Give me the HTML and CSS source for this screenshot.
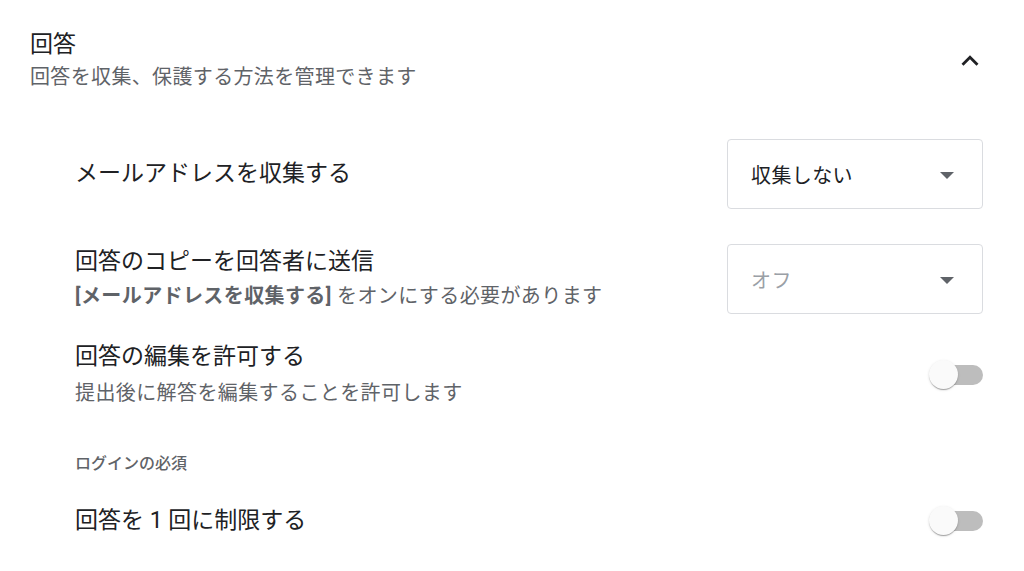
FILE: index.html
```html
<!DOCTYPE html>
<html lang="ja">
<head>
<meta charset="utf-8">
<link rel="stylesheet" href="styles.css">
</head>
<body>
<div class="page">
  <div class="header">
    <div class="head-text">
      <div class="title">回答</div>
      <div class="subtitle">回答を収集、保護する方法を管理できます</div>
    </div>
    <div class="chevron">
      <svg viewBox="0 0 24 24" width="34" height="34"><path d="M12 8l-6 6 1.41 1.41L12 10.83l4.59 4.58L18 14z" fill="#202124"/></svg>
    </div>
  </div>
  <div class="rows">
    <div class="row row-1">
      <div class="label">メールアドレスを収集する</div>
      <div class="select">
        <span class="select-text">収集しない</span>
        <span class="arrow"></span>
      </div>
    </div>
    <div class="row row-2">
      <div class="text-block">
        <div class="label">回答のコピーを回答者に送信</div>
        <div class="sublabel"><b>[メールアドレスを収集する]</b> をオンにする必要があります</div>
      </div>
      <div class="select">
        <span class="select-text disabled">オフ</span>
        <span class="arrow"></span>
      </div>
    </div>
    <div class="row row-3">
      <div class="text-block tall">
        <div class="label">回答の編集を許可する</div>
        <div class="sublabel">提出後に解答を編集することを許可します</div>
      </div>
      <div class="switch"><span class="track"></span><span class="thumb"></span></div>
    </div>
    <div class="group-heading">ログインの必須</div>
    <div class="row row-4">
      <div class="label tall-line">回答を 1 回に制限する</div>
      <div class="switch"><span class="track"></span><span class="thumb"></span></div>
    </div>
  </div>
</div>
</body>
</html>
```
FILE: styles.css
```css
html, body {
  margin: 0;
  padding: 0;
  background: #ffffff;
}
body {
  font-family: Roboto, "Noto Sans CJK JP", sans-serif;
  color: #202124;
}
.page {
  padding: 29px 41px 0 30px;
}
.header {
  display: flex;
  justify-content: space-between;
  align-items: center;
}
.title {
  font-size: 23px;
  line-height: 32px;
  color: #202124;
}
.subtitle {
  font-size: 20px;
  line-height: 32px;
  letter-spacing: 0.35px;
  color: #5f6368;
}
.chevron {
  width: 34px;
  height: 34px;
  margin-right: -4px;
  display: flex;
}
.rows {
  margin-left: 45px;
  margin-top: 46px;
}
.row {
  display: flex;
  justify-content: space-between;
  align-items: center;
}
.label {
  font-size: 23px;
  line-height: 34px;
  color: #202124;
}
.sublabel {
  font-size: 20px;
  line-height: 34px;
  letter-spacing: 0.4px;
  color: #5f6368;
}
.sublabel b {
  font-weight: 700;
  color: #5f6368;
}
.tall .label, .tall .sublabel, .tall-line {
  line-height: 36px;
}
.row-2 { margin-top: 35px; }
.row-3 { margin-top: 25px; }
.group-heading {
  margin-top: 41px;
  font-size: 16px;
  line-height: 24px;
  font-weight: 500;
  color: #5f6368;
}
.row-4 { margin-top: 27px; }
.select {
  box-sizing: border-box;
  width: 256px;
  height: 70px;
  border: 1px solid #dadce0;
  border-radius: 4px;
  display: flex;
  align-items: center;
  justify-content: space-between;
  padding: 0 28px 0 23px;
}
.select-text {
  font-size: 20px;
  letter-spacing: 0.4px;
  color: #202124;
}
.select-text.disabled {
  color: #9aa0a6;
}
.arrow {
  width: 0;
  height: 0;
  border-left: 7px solid transparent;
  border-right: 7px solid transparent;
  border-top: 7px solid #5f6368;
  margin-top: 2px;
}
.switch {
  position: relative;
  width: 54px;
  height: 30px;
}
.track {
  position: absolute;
  right: 0;
  top: 5px;
  width: 48px;
  height: 20px;
  border-radius: 10px;
  background: #bdbdbd;
}
.thumb {
  position: absolute;
  left: 0;
  top: 0;
  width: 29px;
  height: 29px;
  border-radius: 50%;
  background: #fafafa;
  box-shadow: 0 2px 1px -1px rgba(0,0,0,.2), 0 1px 1px 0 rgba(0,0,0,.14), 0 1px 3px 0 rgba(0,0,0,.12);
}
```
